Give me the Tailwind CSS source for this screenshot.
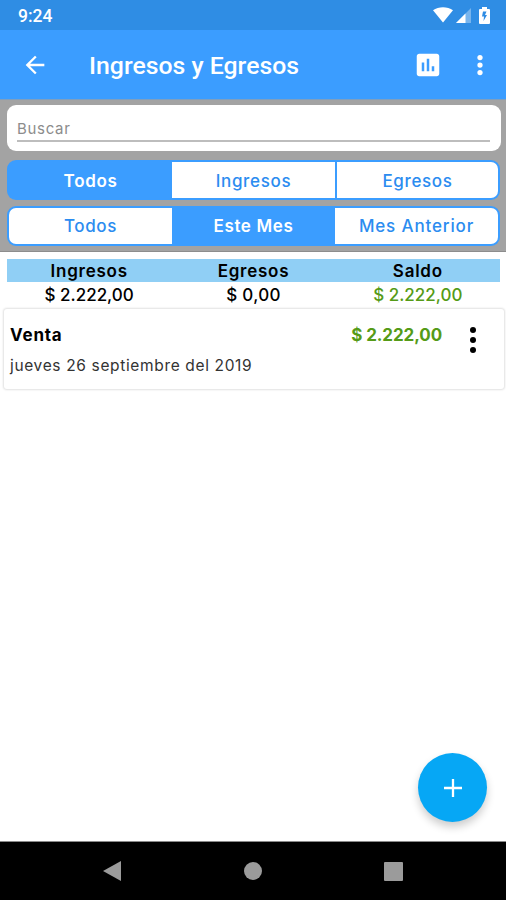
<!DOCTYPE html>
<html lang="es">
<head>
    <meta charset="UTF-8">
    <meta name="viewport" content="width=device-width, initial-scale=1.0">
    <title>Ingresos y Egresos</title>
    <script src="https://cdn.jsdelivr.net/npm/@tailwindcss/browser@4"></script>
</head>
<body class="bg-white font-['Inter',sans-serif]">
<div class="relative flex flex-col w-[506px] h-[900px] overflow-hidden">

    <!-- Status Bar -->
    <div class="flex items-center justify-between h-[30px] bg-[#2f8de4] pl-[18px] pr-4 text-white font-['Roboto',sans-serif]">
        <span class="text-[17.5px] font-medium pt-0.5">9:24</span>
        <div class="flex items-center">
            <svg class="w-5 h-4" viewBox="0 0 20 16" fill="#fff">
                <path d="M0 3.2C5.500 -.8 14.500 -.8 20 3.200L10 15.500Z" />
            </svg>
            <svg class="w-[15px] h-4 ml-[3px]" viewBox="0 0 15 16">
                <path d="M15 1V16H0Z" fill="#fff" fill-opacity=".35" />
                <path d="M9.500 6.500V16H0Z" fill="#fff" />
            </svg>
            <svg class="w-[11px] h-[17px] ml-2" viewBox="0 0 11 17">
                <path d="M3 0h5v2h2q1 0 1 1v13q0 1-1 1H1q-1 0-1-1V3q0-1 1-1h2z" fill="#fff" />
                <path d="M7.500 4.500H4L3 9.500h2L4.500 14 8 8H6z" fill="#2f8de4" />
            </svg>
        </div>
    </div>

    <!-- App Bar -->
    <div class="flex items-center h-[69px] bg-[#3b9dff] pl-[21px] pr-[11px] text-white">
        <button>
            <svg class="w-7 h-7" viewBox="0 0 24 24" fill="#fff">
                <path d="M20 11H7.830l5.590-5.590L12 4l-8 8 8 8 1.410-1.410L7.830 13H20v-2z" />
            </svg>
        </button>
        <h1 class="ml-10 pt-0.5 text-[24.8px] font-medium font-['Roboto',sans-serif]">Ingresos y Egresos</h1>
        <button class="ml-auto">
            <svg class="w-[30px] h-[30px]" viewBox="0 0 24 24" fill="#fff">
                <path d="M19 3H5c-1.100 0-2 .9-2 2v14c0 1.100.9 2 2 2h14c1.100 0 2-.9 2-2V5c0-1.100-.9-2-2-2zM9 17H7v-7h2v7zm4 0h-2V7h2v10zm4 0h-2v-4h2v4z" />
            </svg>
        </button>
        <button class="ml-[22px]">
            <svg class="w-[30px] h-[30px]" viewBox="0 0 24 24" fill="#fff">
                <circle cx="12" cy="6" r="2.100" />
                <circle cx="12" cy="12" r="2.100" />
                <circle cx="12" cy="18" r="2.100" />
            </svg>
        </button>
    </div>

    <!-- Search and Filters -->
    <div class="h-[153px] bg-[#a3a3a3] border-t border-b border-t-[#7f9fbf] border-b-[#8d8d8d] pt-[5px] pl-[7px] pr-[5px]">
        <div class="h-[46px] bg-white rounded-[9px] pl-2.5 pr-[11px] pt-[13px]">
            <div class="h-6 border-b-2 border-[#bdbdbd] text-[15px] leading-[21px] tracking-[0.7px] text-[#8c8c8c]">Buscar</div>
        </div>

        <div class="grid grid-cols-3 h-10 mt-[9px] mr-px p-0.5 bg-[#3b9dff] rounded-[9px] text-[17px] font-medium tracking-[0.65px] text-[#2b8cf0]">
            <button class="pt-1 text-white font-semibold">Todos</button>
            <button class="pt-1 bg-white">Ingresos</button>
            <button class="ml-0.5 pt-1 bg-white rounded-r-[7px]">Egresos</button>
        </div>

        <div class="grid grid-cols-3 h-10 mt-1.5 mr-px p-0.5 bg-[#3b9dff] rounded-[9px] text-[17px] font-medium tracking-[0.65px] text-[#2b8cf0]">
            <button class="pt-0.5 bg-white rounded-l-[7px]">Todos</button>
            <button class="pt-0.5 text-white font-semibold">Este Mes</button>
            <button class="pt-0.5 bg-white rounded-r-[7px] tracking-[0.85px]">Mes Anterior</button>
        </div>
    </div>

    <!-- Totals -->
    <div class="mt-[7px] ml-[7px] mr-1.5 text-center text-black">
        <div class="grid grid-cols-3 h-[23px] leading-[24px] bg-[#90cff5] text-[17px] font-semibold tracking-[0.75px]">
            <span>Ingresos</span>
            <span>Egresos</span>
            <span>Saldo</span>
        </div>
        <div class="grid grid-cols-3 h-[27px] leading-[26px] text-[17px] font-medium">
            <span>$ 2.222,00</span>
            <span class="tracking-[0.3px]">$ 0,00</span>
            <span class="text-[#559b17]">$ 2.222,00</span>
        </div>
    </div>

    <!-- Movement Card -->
    <div class="flex h-20 ml-1 mr-0.5 bg-white rounded-[3px] shadow-[0_0_2px_1px_rgba(0,0,0,0.12)]">
        <div class="flex-1 pl-1.5 pt-[14px] text-black">
            <div class="text-[17px] leading-6 font-bold tracking-[0.8px]">Venta</div>
            <div class="mt-[7px] text-[15.5px] leading-6 tracking-[0.65px] text-[#333]">jueves 26 septiembre del 2019</div>
        </div>
        <div class="pt-[14px] text-[17px] leading-6 font-bold tracking-[-0.1px] text-[#559b17]">$ 2.222,00</div>
        <button class="flex flex-col items-center gap-1 self-start ml-7 mr-7 mt-[18px]">
            <span class="w-1.5 h-1.5 rounded-full bg-black"></span>
            <span class="w-1.5 h-1.5 rounded-full bg-black"></span>
            <span class="w-1.5 h-1.5 rounded-full bg-black"></span>
        </button>
    </div>

    <!-- Add Button -->
    <button class="absolute left-[418px] top-[753px] flex items-center justify-center w-[69px] h-[69px] rounded-full bg-[#06a7f5] shadow-[0_5px_9px_rgba(0,0,0,0.2)]">
        <svg class="w-[18px] h-[18px]" viewBox="0 0 18 18" stroke="#fff" stroke-width="2.300">
            <path d="M9 0V18M0 9H18" />
        </svg>
    </button>

    <!-- Navigation Bar -->
    <div class="flex items-center justify-between h-[59px] mt-auto bg-black border-t border-[#8a8a8a] pl-[103px] pr-[103px]">
        <svg class="w-[19px] h-5" viewBox="0 0 19 20" fill="#9b9b9b">
            <path d="M0 10L18 0V20Z" />
        </svg>
        <span class="w-[18px] h-[18px] rounded-full bg-[#9b9b9b]"></span>
        <span class="w-[19px] h-[19px] rounded-[1px] bg-[#9b9b9b]"></span>
    </div>
</div>
</body>
</html>
